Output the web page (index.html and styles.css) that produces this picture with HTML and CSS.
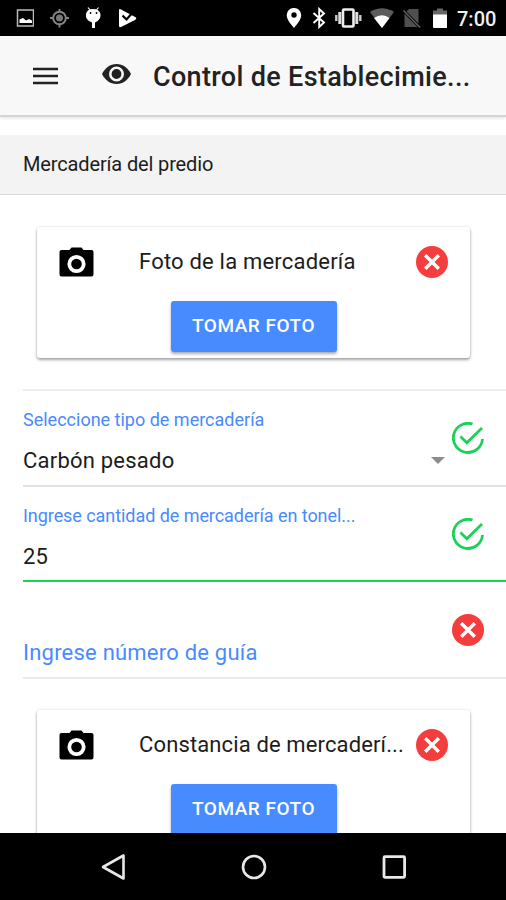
FILE: index.html
```html
<!DOCTYPE html>
<html lang="es">
<head>
<meta charset="utf-8">
<title>Control de Establecimientos</title>
<link rel="stylesheet" href="styles.css">
</head>
<body>
<svg class="defs" width="0" height="0" aria-hidden="true">
  <symbol id="camera" viewBox="0 0 34 30">
    <path fill="#000" d="M2 3H10L12 .5H22L24 3H32Q34 3 34 5V27.500Q34 29.500 32 29.500H2Q0 29.500 0 27.500V5Q0 3 2 3Z"/>
    <circle cx="17" cy="17" r="7.200" fill="none" stroke="#fff" stroke-width="3.800"/>
  </symbol>
  <symbol id="invalid" viewBox="0 0 32 32">
    <circle cx="16" cy="16" r="16" fill="#f53d3d"/>
    <path d="M9.200 9.200L22.800 22.800M22.800 9.200L9.200 22.800" fill="none" stroke="#fff" stroke-width="3.400"/>
  </symbol>
  <symbol id="valid" viewBox="0 0 32 32">
    <g fill="none" stroke="#1bd158" stroke-width="2.800">
      <path d="M20.500 2A14.600 14.600 0 1 0 30.500 17"/>
      <path d="M8.500 14.500L14.800 20.700L30 6"/>
    </g>
  </symbol>
</svg>
<div class="screen">
  <div class="status">
    <div class="status-left">
      <svg width="18" height="20" viewBox="16 8 18 20"><rect x="17.500" y="10" width="16" height="16" fill="none" stroke="#bbb" stroke-width="1.500"/><path fill="#fff" d="M19.500 23V19.500L23 18L26 20.500L29 19L32 20.500V23Z"/></svg>
      <svg width="20" height="20" viewBox="50 8 20 20"><g fill="none" stroke="#858585" stroke-width="1.900"><circle cx="59.500" cy="18" r="6.300"/><path d="M59.500 9V12M59.500 24V27.500M50 18H53M66 18H69"/></g><circle cx="59.500" cy="18" r="3.500" fill="#777"/></svg>
      <svg class="droid" width="18" height="22" viewBox="84 8 18 22"><path d="M88 8.500L90 11M98.500 8.500L96.500 11" stroke="#fff" stroke-width="1.200"/><path fill="#fff" d="M86 15Q87 10 93 10T100.500 15Q101 21 95 23.500V29H92V23.500Q85 21 86 15Z"/><circle cx="90.500" cy="14" r=".9"/><circle cx="96.500" cy="14" r=".9"/></svg>
      <svg width="18" height="20" viewBox="119 8 18 20"><path fill="#fff" d="M119 10Q119 8.500 121 9.500L136 17.500Q137 18.500 135 20L121 27Q119 27.500 119 26Z"/><path d="M122.500 15.500L126.500 19.500L134 11" fill="none" stroke="#000" stroke-width="2.200"/></svg>
    </div>
    <div class="status-right">
      <svg class="pin" width="16" height="20" viewBox="286 8 16 20"><path fill="#fff" fill-rule="evenodd" d="M294 8A7 7 0 0 0 286.700 15C286.700 20 291 24 294 28C297 24 301.200 20 301.200 15A7 7 0 0 0 294 8ZM294 12.300A2.700 2.700 0 1 1 294 17.700A2.700 2.700 0 1 1 294 12.300Z"/></svg>
      <svg class="bluetooth" width="14" height="22" viewBox="312 7 14 22"><path d="M313.500 13L324 22.500L319.200 27V9L324 13.500L313.500 23" fill="none" stroke="#fff" stroke-width="1.900"/></svg>
      <svg class="vibrate" width="28" height="22" viewBox="334 7 28 22"><rect x="343" y="9.500" width="10.500" height="17" rx="1" fill="none" stroke="#eee" stroke-width="2.600"/><path d="M339.800 12V24M356.800 12V24" stroke="#ddd" stroke-width="3"/><path d="M336.300 15V21M360.300 15V21" stroke="#ccc" stroke-width="2.400"/></svg>
      <svg class="wifi" width="24" height="20" viewBox="370 8 24 20"><path fill="#5c5c5c" d="M370 12Q382 4.500 394 12L382 28Z"/><path fill="#fff" d="M374 18Q382 12.500 389.500 18L382 28Z"/></svg>
      <svg class="sim" width="18" height="20" viewBox="403 8 18 20"><path fill="#505050" d="M409 9H418.500V27H404.500V13.500Z"/><path d="M402.500 9.500L420.500 28" stroke="#000" stroke-width="3"/><path d="M403.500 10.500L420 27.500" stroke="#666" stroke-width="1.300"/></svg>
      <svg class="battery" width="14" height="20" viewBox="433 8 14 20"><path fill="#666" d="M433 10.500H437V8.500H443V10.500H447V15H433Z"/><path fill="#fff" d="M433 14.500H447V28H434Q433 28 433 27Z"/></svg>
      <span class="clock">7:00</span>
    </div>
  </div>
  <header class="toolbar">
    <svg class="menu" width="25" height="18" viewBox="0 0 25 18"><path d="M0 2H25M0 9H25M0 16H25" stroke="#222" stroke-width="2.300"/></svg>
    <svg class="eye" width="29" height="20" viewBox="0 0 29 20"><path fill="#222" d="M14.500 0C21 0 26 4 29 10C26 16 21 20 14.500 20S3 16 0 10C3 4 8 0 14.500 0Z"/><circle cx="14.500" cy="10" r="6.200" fill="none" stroke="#f8f8f8" stroke-width="2.600"/></svg>
    <h1>Control de Establecimie...</h1>
  </header>
  <main>
    <h2 class="section"><span>Mercadería del predio</span></h2>
    <section class="card">
      <div class="card-head">
        <svg class="camera"><use href="#camera"/></svg>
        <span class="card-title first">Foto de la mercadería</span>
        <svg class="mark"><use href="#invalid"/></svg>
      </div>
      <button class="photo">TOMAR FOTO</button>
    </section>
    <div class="form">
      <div class="item">
        <div class="field">
          <div class="label">Seleccione tipo de mercadería</div>
          <div class="value"><span>Carbón pesado</span><i class="caret"></i></div>
        </div>
        <svg class="mark"><use href="#valid"/></svg>
      </div>
      <div class="item ok">
        <div class="field">
          <div class="label amount">Ingrese cantidad de mercadería en tonel...</div>
          <div class="value"><span>25</span></div>
        </div>
        <svg class="mark"><use href="#valid"/></svg>
      </div>
      <div class="item last">
        <div class="field empty"><span>Ingrese número de guía</span></div>
        <svg class="mark"><use href="#invalid"/></svg>
      </div>
    </div>
    <section class="card">
      <div class="card-head">
        <svg class="camera"><use href="#camera"/></svg>
        <span class="card-title">Constancia de mercaderí...</span>
        <svg class="mark"><use href="#invalid"/></svg>
      </div>
      <button class="photo">TOMAR FOTO</button>
    </section>
  </main>
  <nav class="nav">
    <svg width="26" height="28" viewBox="0 0 26 28"><path d="M3 14L23.500 2.500V25.500Z" fill="none" stroke="#e8e8e8" stroke-width="2.600" stroke-linejoin="round"/></svg>
    <svg width="26" height="28" viewBox="0 0 26 28"><circle cx="13" cy="14" r="11" fill="none" stroke="#e8e8e8" stroke-width="2.600"/></svg>
    <svg width="26" height="28" viewBox="0 0 26 28"><rect x="3" y="3.700" width="20.600" height="20.600" rx="1" fill="none" stroke="#e8e8e8" stroke-width="2.800"/></svg>
  </nav>
</div>
</body>
</html>
```
FILE: styles.css
```css
* { box-sizing: border-box; }
body { margin: 0; background: #fff; color: #1c1c1c; font-family: Roboto, "Liberation Sans", sans-serif; }
svg { display: block; flex: none; }
.defs { position: absolute; }
.screen { width: 506px; height: 900px; display: flex; flex-direction: column; overflow: hidden; }
.status { flex: none; height: 36px; background: #000; display: flex; justify-content: space-between; align-items: center; padding: 0 10px 0 16px; }
.status-left { display: flex; gap: 16px; align-items: center; }
.droid { margin: 0 1px 0 -2px; }
.status-right { display: flex; align-items: center; }
.pin { margin-right: 10px; }
.bluetooth { margin-right: 8px; }
.vibrate { margin-right: 8px; }
.wifi { margin-right: 9px; }
.sim { margin-right: 12px; }
.battery { margin-right: 10px; }
.clock { color: #f0f0f0; font-size: 20px; font-weight: 500; line-height: 24px; width: 39px; white-space: nowrap; padding-top: 1px; }
.toolbar { flex: none; height: 81px; background: #f8f8f8; border-bottom: 2px solid #d4d4d4; box-shadow: 0 1px 3px #0002; display: flex; align-items: center; padding-left: 33px; }
.eye { margin: 0 22px 4px 44px; }
h1 { margin: 3px 0 0; font-size: 27px; line-height: 34px; font-weight: 500; letter-spacing: .33px; white-space: nowrap; color: #222; }
main { flex: 1; min-height: 0; overflow: hidden; padding-top: 18px; }
.section { margin: 0 0 32px; height: 60px; background: #f3f3f3; border-bottom: 1px solid #dadada; padding: 0 23px 2px; display: flex; align-items: center; font-size: 20px; font-weight: 400; letter-spacing: -.14px; }
.card { margin: 0 36px 31px 37px; height: 131px; background: #fff; border-radius: 3px; box-shadow: 0 2px 3px #0005, 0 0 3px #0002; }
.card-head { height: 74px; display: flex; align-items: center; padding: 0 22px 5px; }
.camera { width: 35px; height: 30px; margin-right: 45px; }
.card-title { flex: 1; font-size: 22px; letter-spacing: .13px; white-space: nowrap; }
.card-title.first { letter-spacing: .2px; }
.mark { width: 32px; height: 32px; }
.photo { display: block; margin: 0 auto; width: 166px; height: 51px; border: 0; border-radius: 3px; padding: 0 0 3px; background: #488aff; color: #fff; font: 500 19px Roboto, sans-serif; letter-spacing: .5px; box-shadow: 0 2px 3px #0005; white-space: nowrap; }
.form { margin: 0 0 31px 23px; border-top: 2px solid #ededed; }
.item { height: 96px; display: flex; align-items: center; border-bottom: 2px solid #e2e2e2; padding: 0 22px 0 0; }
.item.ok { border-bottom-color: #20cf58; height: 95px; }
.item.last { height: 97px; border-bottom-color: #e9e9e9; }
.field { flex: 1; height: 100%; padding-top: 17px; }
.label { font-size: 18px; line-height: 24px; color: #488aff; white-space: nowrap; }
.amount { letter-spacing: -.06px; }
.value { display: flex; align-items: center; justify-content: space-between; height: 32px; margin-top: 12px; font-size: 22px; letter-spacing: .22px; padding-right: 7px; }
.caret { border: 7px solid transparent; border-top-color: #8c8c8c; border-bottom: 0; }
.empty { display: flex; align-items: flex-end; padding-bottom: 11px; font-size: 22px; line-height: 26px; letter-spacing: .22px; color: #488aff; }
.nav { flex: none; height: 67px; background: #000; display: flex; justify-content: space-between; padding: 20px 99px 0 100px; }
```
